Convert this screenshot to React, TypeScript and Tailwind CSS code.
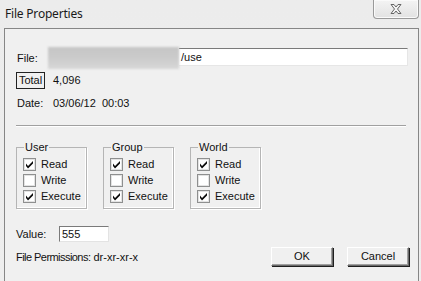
import React from 'react'

const UI = { fontFamily: '"Liberation Sans", Arial, sans-serif' }

function Check({ checked }: { checked: boolean }) {
  return (
    <svg width="13" height="13" viewBox="0 0 13 13" className="shrink-0">
      <rect x="0.5" y="0.5" width="12" height="12" fill="#fff" stroke="#8e8f8f" />
      <rect x="1.5" y="1.5" width="10" height="10" fill="none" stroke="#e3e3e3" />
      {checked && <path d="M3 5.5 L5 8 L10 3 L10 5.5 L5 10.5 L3 8 Z" fill="#0a0a0a" />}
    </svg>
  )
}

function PermGroup({ title, perms }: { title: string; perms: [string, boolean][] }) {
  return (
    <div className="relative w-[71px] h-[62px] border border-[#b5b5b5] shadow-[inset_-1px_-1px_0_#fff,1px_1px_0_#fff]">
      <span className="absolute -top-[8px] left-[7px] px-[1px] bg-[#f0f0f0] text-[11px] leading-[14px] text-[#111]">{title}</span>
      <div className="flex flex-col gap-[3px] pt-[10px] pl-[6px]">
        {perms.map(([label, on]) => (
          <div key={label} className="flex items-center gap-[5px] h-[13px] text-[11px] text-[#111]">
            <Check checked={on} />
            <span>{label}</span>
          </div>
        ))}
      </div>
    </div>
  )
}

function Button({ children }: { children: React.ReactNode }) {
  return (
    <div className="w-[62px] h-[19px] flex items-center justify-center bg-[#f0f0f0] text-[11px] text-[#111] border border-[#fff] border-r-[#696969] border-b-[#696969] shadow-[1px_1px_0_#1e1e1e,inset_-1px_-1px_0_#a0a0a0]">
      {children}
    </div>
  )
}

export default function App() {
  const groups: { title: string; perms: [string, boolean][] }[] = [
    { title: 'User', perms: [['Read', true], ['Write', false], ['Execute', true]] },
    { title: 'Group', perms: [['Read', true], ['Write', false], ['Execute', true]] },
    { title: 'World', perms: [['Read', true], ['Write', false], ['Execute', true]] },
  ]

  return (
    <div className="w-[421px] h-[281px] overflow-hidden bg-gradient-to-b from-[#ececec] to-[#eeeeee]" style={UI}>
      {/* title bar */}
      <div className="h-[28px] flex items-start justify-between">
        <span className="pl-[5px] pt-[6px] text-[12px] leading-[16px] tracking-[-0.2px] text-[#1a1a1a]" style={{ fontFamily: '"Noto Sans", "Open Sans", sans-serif' }}>
          File Properties
        </span>
        <div className="w-[46px] h-[19px] mr-[2px] rounded-b-[4px] border border-t-0 border-[#9a9a9a] bg-gradient-to-b from-[#f4f4f4] to-[#e2e2e2] flex items-center justify-center shadow-[inset_0_0_0_1px_#fafafa]">
          <svg width="12" height="10" viewBox="0 0 12 10">
            <path d="M1 0.5 L4 0.5 L6 3 L8 0.5 L11 0.5 L7.5 5 L11 9.5 L8 9.5 L6 7 L4 9.5 L1 9.5 L4.5 5 Z" fill="#f4f4f4" stroke="#666" strokeWidth="1" strokeLinejoin="round" />
          </svg>
        </div>
      </div>

      {/* client area */}
      <div className="ml-[4px] mr-[2px] h-[300px] border border-[#868686] bg-[#f0f0f0] pl-[11px] pr-[9px] pt-[18px] text-[11px] text-[#111]">
        <div className="flex items-start h-[22px]">
          <span className="w-[32px] pl-[1px] pt-[3px]">File:</span>
          <div className="w-[131px] h-[22px] bg-gradient-to-b from-[#c6c6c6] via-[#cbcbcb] to-[#d8d8d8] blur-[1px]" />
          <div className="flex-1 h-[18px] mt-[1px] mr-[1px] bg-white border-t border-t-[#7a7a7a] border-b border-b-[#e6e6e6] border-r border-r-[#e6e6e6] flex items-center pl-[2px]">
            /use
          </div>
        </div>

        <div className="flex items-center mt-[3px] h-[17px]">
          <div className="w-[29px] h-[17px] border border-[#222] flex items-center justify-center">Total</div>
          <span className="ml-[8px]">4,096</span>
        </div>

        <div className="flex items-center mt-[7px] h-[14px]">
          <span className="w-[37px] pl-[1px]">Date:</span>
          <span>03/06/12&nbsp;&nbsp;00:03</span>
        </div>

        <div className="mt-[15px] h-[2px] mr-[3px] border-t border-t-[#a0a0a0] border-b border-b-white" />

        <div className="flex gap-[16px] mt-[20px]">
          {groups.map(g => (
            <PermGroup key={g.title} title={g.title} perms={g.perms} />
          ))}
        </div>

        <div className="flex items-center mt-[17px] h-[16px]">
          <span className="w-[43px]">Value:</span>
          <div className="w-[50px] h-[16px] bg-white border border-[#7a7a7a] border-r-[#e3e3e3] border-b-[#e3e3e3] flex items-center pl-[2px]">555</div>
        </div>

        <div className="flex items-center justify-between mt-[5px] h-[19px]">
          <span className="pt-[2px]">
            <span className="tracking-[-0.55px]">File Permissions:</span> dr-xr-xr-x
          </span>
          <div className="flex gap-[14px]">
            <Button>OK</Button>
            <Button>Cancel</Button>
          </div>
        </div>
      </div>
    </div>
  )
}
